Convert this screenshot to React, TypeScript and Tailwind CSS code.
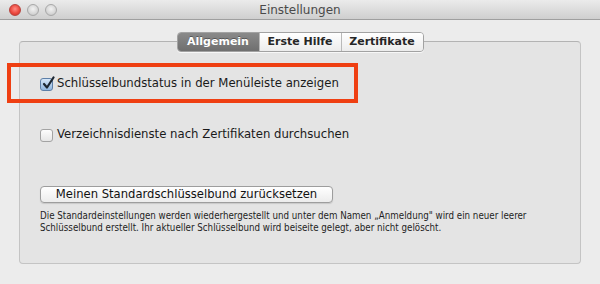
import React from 'react'

const ui = "font-['DejaVu_Sans','Liberation_Sans',sans-serif]"

function TrafficLight({ red }: { red?: boolean }) {
  return (
    <span
      className={
        red
          ? 'w-3 h-3 rounded-full border border-[#b8433d] bg-[radial-gradient(circle_at_50%_40%,#ff8c84_0%,#ec4a40_55%,#c72f27_100%)]'
          : 'w-3 h-3 rounded-full border border-[#a8a8a8] bg-[radial-gradient(circle_at_50%_40%,#f2f2f2_0%,#d6d6d6_60%,#b9b9b9_100%)]'
      }
    />
  )
}

function Checkbox({ checked }: { checked?: boolean }) {
  if (checked) {
    return (
      <span className="relative w-[13px] h-[13px] rounded-[3px] border border-[#5d7fa8] bg-gradient-to-b from-[#d5e6f8] to-[#8fb6e0] shrink-0">
        <svg className="absolute -top-[3px] left-[1px]" width="13" height="14" viewBox="0 0 13 14">
          <path d="M2 8 L5 11.5 L11.5 1.5" fill="none" stroke="#1c2733" strokeWidth="2.2" strokeLinecap="round" strokeLinejoin="round" />
        </svg>
      </span>
    )
  }
  return <span className="w-[13px] h-[13px] rounded-[3px] border border-[#a3a3a3] bg-gradient-to-b from-[#fdfdfd] to-[#e6e6e6] shrink-0" />
}

export default function App() {
  const tabs = ['Allgemein', 'Erste Hilfe', 'Zertifikate']

  return (
    <div className={`relative w-[600px] h-[284px] overflow-hidden bg-[#ececec] ${ui}`}>
      {/* Title bar */}
      <div className="relative h-5 flex items-center justify-center bg-gradient-to-b from-[#ebebeb] to-[#cfcfcf] border-b border-[#9f9f9f]">
        <div className="absolute left-[9px] top-[4px] flex gap-[6px]">
          <TrafficLight red />
          <TrafficLight />
          <TrafficLight />
        </div>
        <span className="text-[12px] text-[#4a4a4a]">Einstellungen</span>
      </div>

      <div className="px-[19px] pt-[12px]">
        {/* Tabs */}
        <div className="relative z-10 flex justify-center">
          <div className="flex h-5 rounded-[4px] border border-[#a2a2a2] overflow-hidden shadow-[0_1px_0_rgba(255,255,255,0.7)]">
            {tabs.map((t, i) => (
              <div
                key={t}
                className={
                  i === 0
                    ? 'w-[81px] flex items-center justify-center text-[11px] font-bold text-white bg-gradient-to-b from-[#8a8a8a] to-[#6f6f6f] [text-shadow:0_-1px_0_rgba(0,0,0,0.35)]'
                    : 'w-[82px] flex items-center justify-center text-[11px] font-bold text-[#262626] bg-gradient-to-b from-[#ffffff] to-[#ececec] border-l border-[#b9b9b9]'
                }
              >
                {t}
              </div>
            ))}
          </div>
        </div>

        {/* Group box */}
        <div className="-mt-[11px] h-[223px] rounded-[4px] border border-[#c4c4c4] border-t-[#b3b3b3] bg-[#e4e4e4] pl-5 pt-[34px]">
          <label className="flex items-center gap-1 h-4 text-[11.7px] text-[#1a1a1a]">
            <Checkbox checked />
            <span>Schlüsselbundstatus in der Menüleiste anzeigen</span>
          </label>
          <label className="mt-[35px] flex items-center gap-1 h-4 text-[11.7px] text-[#1a1a1a]">
            <Checkbox />
            <span>Verzeichnisdienste nach Zertifikaten durchsuchen</span>
          </label>

          <button className="mt-[43px] w-[293px] h-[17px] flex items-center justify-center rounded-[4px] border border-[#9d9d9d] bg-gradient-to-b from-[#ffffff] to-[#ececec] text-[11.6px] text-[#111] shadow-[0_1px_1px_rgba(0,0,0,0.12)]">
            Meinen Standardschlüsselbund zurücksetzen
          </button>
          <p className="mt-[7px] whitespace-nowrap font-['DejaVu_Sans_Condensed','Liberation_Sans_Narrow',sans-serif] text-[9.7px] leading-3 text-[#1e1e1e]">
            Die Standardeinstellungen werden wiederhergestellt und unter dem Namen „Anmeldung" wird ein neuer leerer
            <br />
            Schlüsselbund erstellt. Ihr aktueller Schlüsselbund wird beiseite gelegt, aber nicht gelöscht.
          </p>
        </div>
      </div>

      {/* Highlight annotation */}
      <div className="absolute left-[7px] top-[63px] w-[351px] h-[40px] border-4 border-[#ef3f12]" />
    </div>
  )
}
